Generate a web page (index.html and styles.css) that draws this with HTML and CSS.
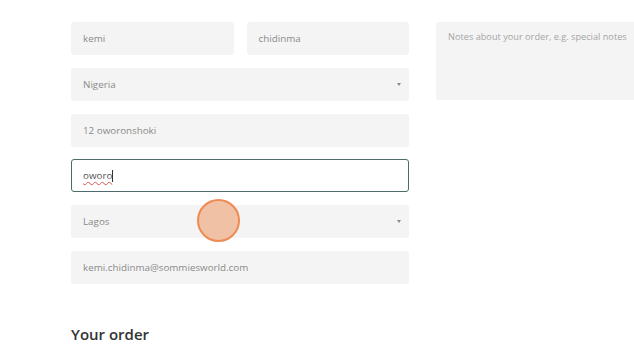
FILE: index.html
```html
<!DOCTYPE html>
<html>
<head>
<meta charset="utf-8">
<link rel="stylesheet" href="styles.css">
</head>
<body>
<div class="page">
  <div class="cols">
    <div class="left">
      <div class="row two">
        <div class="field">kemi</div>
        <div class="field">chidinma</div>
      </div>
      <div class="field select">Nigeria<span class="arrow"></span></div>
      <div class="field">12 oworonshoki</div>
      <div class="field focus"><span class="typo">oworo</span><span class="caret"></span></div>
      <div class="field select">Lagos<span class="arrow"></span><span class="tap"></span></div>
      <div class="field">kemi.chidinma@sommiesworld.com</div>
    </div>
    <div class="right">
      <div class="notes">Notes about your order, e.g. special notes</div>
    </div>
  </div>
  <h3 class="heading">Your order</h3>
</div>
</body>
</html>
```
FILE: styles.css
```css
html, body {
  margin: 0;
  padding: 0;
  background: #ffffff;
  overflow: hidden;
}
body {
  width: 634px;
  height: 352px;
  font-family: "Open Sans", "Liberation Sans", sans-serif;
}
.page {
  padding: 22px 0 0 71px;
}
.cols {
  display: flex;
  gap: 27px;
}
.left {
  width: 338px;
  display: flex;
  flex-direction: column;
  gap: 12.8px;
  flex: none;
}
.row.two {
  display: grid;
  grid-template-columns: 1fr 1fr;
  gap: 13px;
}
.field {
  position: relative;
  height: 33px;
  box-sizing: border-box;
  background: #f4f4f4;
  border-radius: 3px;
  padding: 0 12px;
  display: flex;
  align-items: center;
  font-size: 9.8px;
  color: #8a8a8a;
}
.field.focus {
  background: #ffffff;
  border: 1px solid #4f6b69;
  padding: 0 11px;
  color: #555;
}
.typo {
  text-decoration: underline wavy #d9534f;
  text-decoration-thickness: 1px;
  text-underline-offset: 2px;
}
.caret {
  display: inline-block;
  width: 1px;
  height: 12px;
  background: #333;
}
.arrow {
  position: absolute;
  right: 8px;
  top: 15px;
  width: 0;
  height: 0;
  border-left: 2.5px solid transparent;
  border-right: 2.5px solid transparent;
  border-top: 3px solid #888;
}
.tap {
  position: absolute;
  left: 126px;
  top: -6px;
  width: 39px;
  height: 39px;
  border-radius: 50%;
  background: #f1c1a5;
  border: 2px solid #ee8b53;
}
.right {
  flex: none;
  width: 240px;
}
.notes {
  height: 78px;
  box-sizing: border-box;
  background: #f4f4f4;
  border-radius: 3px;
  padding: 8px 12px;
  font-size: 9.2px;
  color: #a5a5a5;
  white-space: nowrap;
  overflow: hidden;
}
.heading {
  margin: 40px 0 0 0;
  font-size: 15px;
  font-weight: 600;
  color: #333333;
}
```
